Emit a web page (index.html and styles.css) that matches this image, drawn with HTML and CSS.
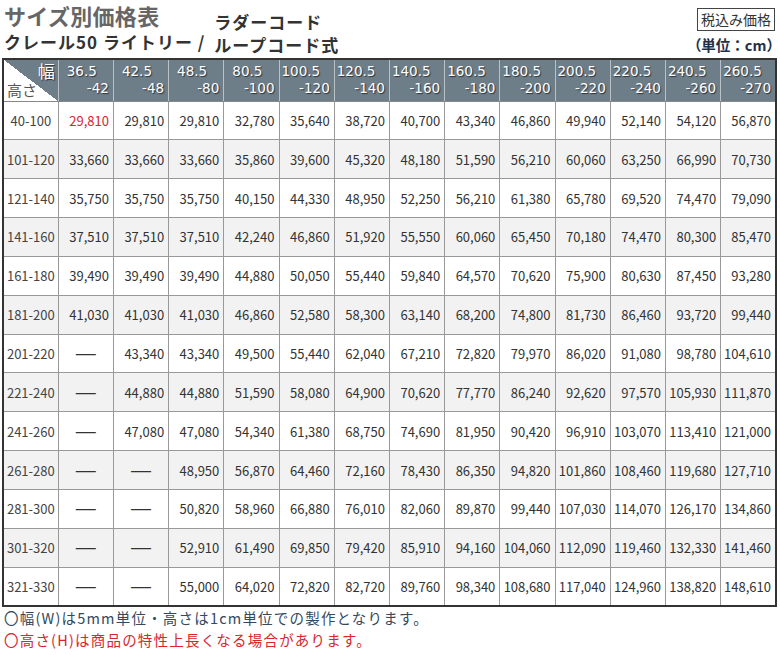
FILE: index.html
```html
<!DOCTYPE html>
<html lang="ja">
<head>
<meta charset="utf-8">
<link rel="stylesheet" href="styles.css">
</head>
<body>
<div class="page">
  <div class="top">
    <div class="head-left">
      <div class="col-a">
        <div class="title">サイズ別価格表</div>
        <div class="product">クレール50 ライトリー / </div>
      </div>
      <div class="col-b">
        <div class="product">ラダーコード</div>
        <div class="product">ループコード式</div>
      </div>
    </div>
    <div class="head-right">
      <div class="tax">税込み価格</div>
      <div class="unit">（単位：cm）</div>
    </div>
  </div>
  <table class="price">
    <thead>
      <tr>
        <th class="corner"><span class="w">幅</span><span class="h">高さ</span></th>
        <th class="s"><span class="a">36.5</span><span class="b">-42</span></th>
        <th class="s"><span class="a">42.5</span><span class="b">-48</span></th>
        <th class="s"><span class="a">48.5</span><span class="b">-80</span></th>
        <th class="s"><span class="a">80.5</span><span class="b">-100</span></th>
        <th><span class="a">100.5</span><span class="b">-120</span></th>
        <th><span class="a">120.5</span><span class="b">-140</span></th>
        <th><span class="a">140.5</span><span class="b">-160</span></th>
        <th><span class="a">160.5</span><span class="b">-180</span></th>
        <th><span class="a">180.5</span><span class="b">-200</span></th>
        <th><span class="a">200.5</span><span class="b">-220</span></th>
        <th><span class="a">220.5</span><span class="b">-240</span></th>
        <th><span class="a">240.5</span><span class="b">-260</span></th>
        <th><span class="a">260.5</span><span class="b">-270</span></th>
      </tr>
    </thead>
    <tbody>
      <tr><td class="rh">40-100</td><td class="red">29,810</td><td>29,810</td><td>29,810</td><td>32,780</td><td>35,640</td><td>38,720</td><td>40,700</td><td>43,340</td><td>46,860</td><td>49,940</td><td>52,140</td><td>54,120</td><td>56,870</td></tr>
      <tr><td class="rh">101-120</td><td>33,660</td><td>33,660</td><td>33,660</td><td>35,860</td><td>39,600</td><td>45,320</td><td>48,180</td><td>51,590</td><td>56,210</td><td>60,060</td><td>63,250</td><td>66,990</td><td>70,730</td></tr>
      <tr><td class="rh">121-140</td><td>35,750</td><td>35,750</td><td>35,750</td><td>40,150</td><td>44,330</td><td>48,950</td><td>52,250</td><td>56,210</td><td>61,380</td><td>65,780</td><td>69,520</td><td>74,470</td><td>79,090</td></tr>
      <tr><td class="rh">141-160</td><td>37,510</td><td>37,510</td><td>37,510</td><td>42,240</td><td>46,860</td><td>51,920</td><td>55,550</td><td>60,060</td><td>65,450</td><td>70,180</td><td>74,470</td><td>80,300</td><td>85,470</td></tr>
      <tr><td class="rh">161-180</td><td>39,490</td><td>39,490</td><td>39,490</td><td>44,880</td><td>50,050</td><td>55,440</td><td>59,840</td><td>64,570</td><td>70,620</td><td>75,900</td><td>80,630</td><td>87,450</td><td>93,280</td></tr>
      <tr><td class="rh">181-200</td><td>41,030</td><td>41,030</td><td>41,030</td><td>46,860</td><td>52,580</td><td>58,300</td><td>63,140</td><td>68,200</td><td>74,800</td><td>81,730</td><td>86,460</td><td>93,720</td><td>99,440</td></tr>
      <tr><td class="rh">201-220</td><td class="na">—</td><td>43,340</td><td>43,340</td><td>49,500</td><td>55,440</td><td>62,040</td><td>67,210</td><td>72,820</td><td>79,970</td><td>86,020</td><td>91,080</td><td>98,780</td><td>104,610</td></tr>
      <tr><td class="rh">221-240</td><td class="na">—</td><td>44,880</td><td>44,880</td><td>51,590</td><td>58,080</td><td>64,900</td><td>70,620</td><td>77,770</td><td>86,240</td><td>92,620</td><td>97,570</td><td>105,930</td><td>111,870</td></tr>
      <tr><td class="rh">241-260</td><td class="na">—</td><td>47,080</td><td>47,080</td><td>54,340</td><td>61,380</td><td>68,750</td><td>74,690</td><td>81,950</td><td>90,420</td><td>96,910</td><td>103,070</td><td>113,410</td><td>121,000</td></tr>
      <tr><td class="rh">261-280</td><td class="na">—</td><td class="na">—</td><td>48,950</td><td>56,870</td><td>64,460</td><td>72,160</td><td>78,430</td><td>86,350</td><td>94,820</td><td>101,860</td><td>108,460</td><td>119,680</td><td>127,710</td></tr>
      <tr><td class="rh">281-300</td><td class="na">—</td><td class="na">—</td><td>50,820</td><td>58,960</td><td>66,880</td><td>76,010</td><td>82,060</td><td>89,870</td><td>99,440</td><td>107,030</td><td>114,070</td><td>126,170</td><td>134,860</td></tr>
      <tr><td class="rh">301-320</td><td class="na">—</td><td class="na">—</td><td>52,910</td><td>61,490</td><td>69,850</td><td>79,420</td><td>85,910</td><td>94,160</td><td>104,060</td><td>112,090</td><td>119,460</td><td>132,330</td><td>141,460</td></tr>
      <tr><td class="rh">321-330</td><td class="na">—</td><td class="na">—</td><td>55,000</td><td>64,020</td><td>72,820</td><td>82,720</td><td>89,760</td><td>98,340</td><td>108,680</td><td>117,040</td><td>124,960</td><td>138,820</td><td>148,610</td></tr>
    </tbody>
  </table>
  <div class="notes">
    <p class="note">〇幅(W)は5mm単位・高さは1cm単位での製作となります。</p>
    <p class="note red">〇高さ(H)は商品の特性上長くなる場合があります。</p>
  </div>
</div>
</body>
</html>
```

FILE: styles.css
```css
* { box-sizing: border-box; }
html, body { margin: 0; padding: 0; background: #fff; }
body {
  font-family: "Noto Sans CJK JP", "Noto Sans", sans-serif;
  color: #333;
  width: 780px;
}
.page { padding: 0 2px 0 2px; }

.top {
  display: flex;
  justify-content: space-between;
  height: 58px;
}
.head-left { display: flex; gap: 4px; padding-left: 2px; }
.col-a { display: flex; flex-direction: column; }
.col-b { display: flex; flex-direction: column; padding-top: 10px; }
.title {
  font-size: 22px;
  font-weight: bold;
  color: #666;
  line-height: 30px;
  letter-spacing: 0.3px;
}
.product {
  font-size: 17px;
  font-weight: bold;
  color: #333;
  line-height: 23px;
  letter-spacing: 1px;
  white-space: pre;
}
.head-right {
  display: flex;
  flex-direction: column;
  align-items: flex-end;
  padding-top: 8px;
  padding-right: 3px;
}
.tax {
  border: 1px solid #444;
  font-size: 14px;
  line-height: 21px;
  padding: 0 3px;
  color: #333;
}
.unit {
  margin-top: 5px;
  margin-right: -6px;
  font-size: 14.5px;
  font-weight: bold;
  color: #1e3049;
  line-height: 18px;
}

.price {
  border-collapse: collapse;
  table-layout: fixed;
  width: 775px;
  border: 2px solid #333;
}
.price th {
  background: #6e7e89;
  color: #fff;
  font-family: "DejaVu Sans", sans-serif;
  font-weight: normal;
  font-size: 13.5px;
  height: 42px;
  padding: 0 4px 0 2px;
  border-left: 1px solid #b9c1c7;
  border-bottom: 1px solid #888;
  text-shadow: 1px 1px 1px #2b3238;
  line-height: 17px;
  vertical-align: middle;
}
.price th.s { padding-left: 8px; }
.price th .a { display: block; text-align: left; }
.price th .b { display: block; text-align: right; }
.price th.corner {
  background: linear-gradient(to top right, #fff 50%, #6e7e89 50%);
  border-left: none;
  padding: 0 3px;
  font-family: "Noto Sans CJK JP", sans-serif;
}
.corner .w { display: block; text-align: right; font-size: 17px; line-height: 19px; }
.corner .h { display: block; text-align: left; color: #555; text-shadow: none; font-size: 15px; line-height: 19px; }

.price td {
  height: 38.85px;
  border: 1px solid #999;
  font-size: 13px;
  text-align: right;
  padding: 0 4px 0 0;
  color: #333;
  white-space: nowrap;
}
.price tbody tr:nth-child(even) td { background: #f2f2f2; }
.price td.rh { text-align: center; padding: 0; color: #444; }
.price td.red { color: #d4262f; }
.price td.na { text-align: center; padding: 0; font-family: "Liberation Sans", sans-serif; font-size: 20px; }

.notes { padding-left: 2px; }
.note {
  margin: 0;
  font-size: 14.5px;
  line-height: 22px;
  color: #34495e;
  letter-spacing: 1.2px;
}
.note.red { color: #d9262c; }
```
